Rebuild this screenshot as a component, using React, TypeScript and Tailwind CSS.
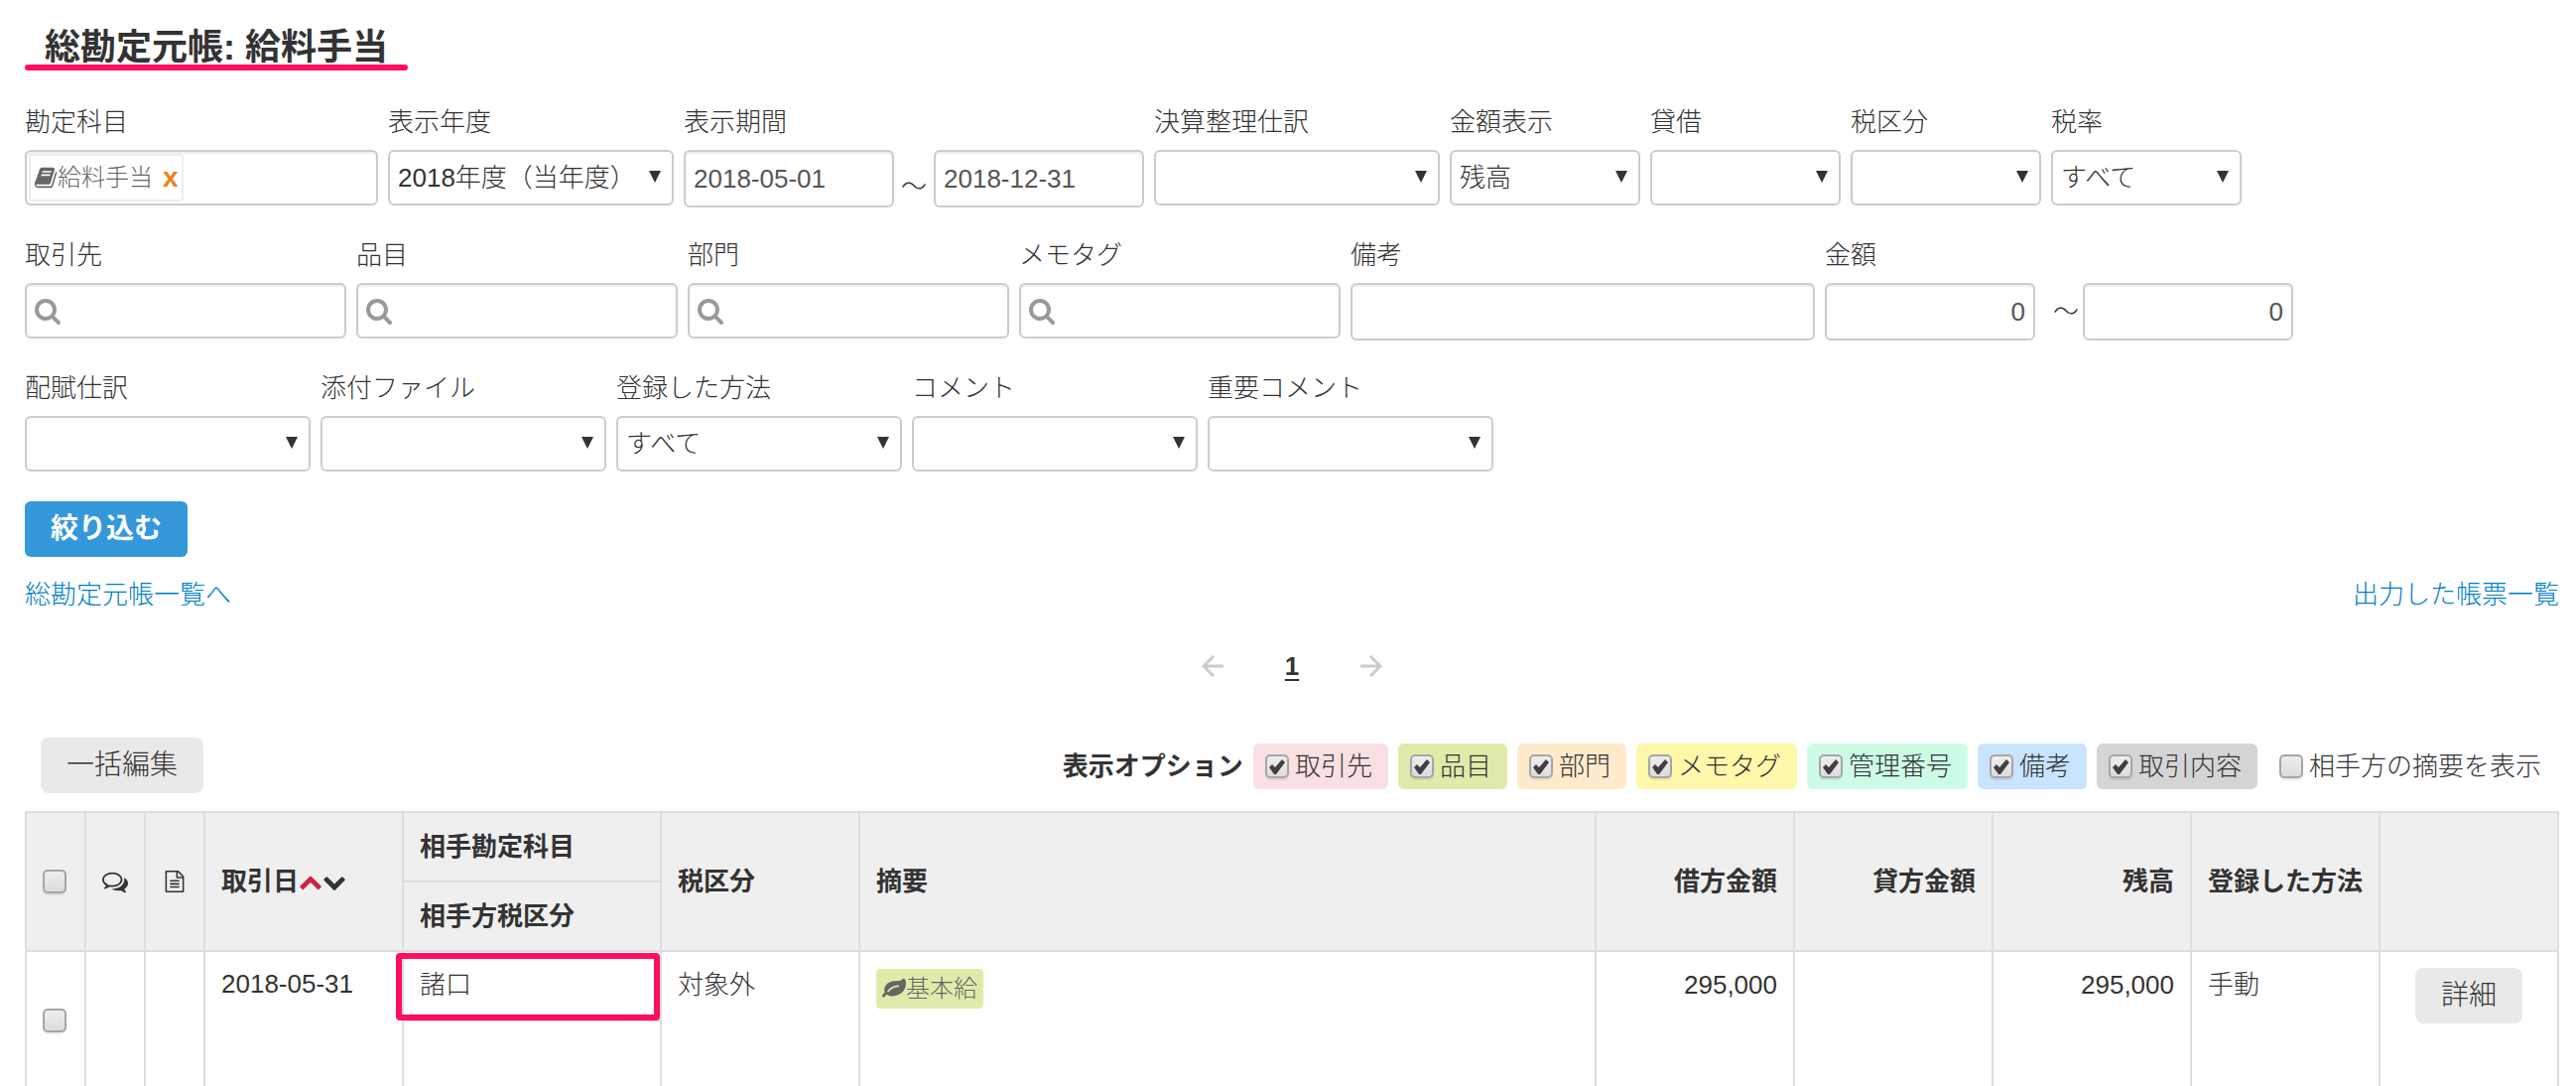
import { useId } from "react";
import type { ReactNode } from "react";
import clsx from "clsx";

const icons = {
  search:
    "M1152 832q0-185-131.5-316.5t-316.5-131.5-316.5 131.5-131.5 316.5 131.5 316.5 316.5 131.5 316.5-131.5 131.5-316.5zm512 832q0 52-38 90t-90 38q-54 0-90-38l-343-342q-179 124-399 124-143 0-273.5-55.5t-225-150-150-225-55.5-273.5 55.5-273.5 150-225 225-150 273.5-55.5 273.5 55.5 225 150 150 225 55.5 273.5q0 220-124 399l343 343q37 37 37 90z",
  book:
    "M1703 478q40 57 18 129l-275 906q-19 64-76.5 107.5t-122.5 43.5h-923q-77 0-148.5-53.5t-99.5-131.5q-24-67-2-127 0-4 3-27t4-37q1-8-3-21.5t-3-19.5q2-11 8-21t16.5-23.5 16.5-23.5q23-38 45-91.5t30-91.5q3-10 .5-30t-.5-28q3-11 17-28t17-23q21-36 42-92t25-90q1-9-2.5-32t.5-28q4-13 22-30.5t22-22.5q19-26 42.5-84.5t27.5-96.5q1-8-3-25.5t-2-26.5q2-8 9-18t18-23 17-21q8-12 16.5-30.5t15-35 16-36 19.5-32 26.5-23.5 36-11.5 47.5 5.5l-1 3q38-9 51-9h761q74 0 114 56t18 130l-274 906q-36 119-71.5 153.5t-128.5 34.5h-869q-27 0-38 15-11 16-1 43 24 70 144 70h923q29 0 56-15.5t35-41.5l300-987q7-22 5-57 38 15 59 43zm-1064 2q-4 13 2 22.5t20 9.5h608q13 0 25.5-9.5t16.5-22.5l21-64q4-13-2-22.5t-20-9.5h-608q-13 0-25.5 9.5t-16.5 22.5zm-83 256q-4 13 2 22.5t20 9.5h608q13 0 25.5-9.5t16.5-22.5l21-64q4-13-2-22.5t-20-9.5h-608q-13 0-25.5 9.5t-16.5 22.5z",
  leaf:
    "M1280 704q0-26-19-45t-45-19q-172 0-318 49.5t-259.5 134-235.5 219.5q-19 21-19 45 0 26 19 45t45 19q24 0 45-19 27-24 74-71t67-66q137-124 268.5-176t313.5-52q26 0 45-19t19-45zm512-198q0 95-20 193-46 224-184.5 383t-357.5 268q-214 108-438 108-148 0-286-47-15-5-88-42t-96-37q-16 0-39.5 32t-45 70-52.5 70-60 32q-43 0-63.5-17.5t-45.5-59.5q-2-4-6-11t-5.5-10-3-9.5-1.5-13.5q0-35 31-73.5t68-65.5 68-56 31-48q0-4-14-38t-16-44q-9-51-9-104 0-115 43.5-220t119-184.5 170.5-139 204-95.5q55-18 145-25.5t179.5-9 178.5-6 163.5-24 113.5-56.5l29.5-29.5 29.5-28 27-20 36.5-16 43.5-4.5q39 0 70.5 46t47.5 112 24 124 8 96z",
  comments:
    "M704 384q-153 0-286 52t-211.5 141-78.5 191q0 82 53 158t149 132l97 56-35 84q34-20 62-39l44-31 53 10q78 14 153 14 153 0 286-52t211.5-141 78.5-191-78.5-191-211.5-141-286-52zm0-128q191 0 353.5 68.5t256.5 186.5 94 257-94 257-256.5 186.5-353.5 68.5q-86 0-176-16-124 88-278 128-36 9-86 16h-3q-11 0-20.5-8t-11.5-21q-1-3-1-6.5t.5-6.5 2-6l2.5-5 3.5-5.5 4-5 4.5-5 4-4.5q5-6 23-25t26-29.5 22.5-29 25-38.5 20.5-44q-124-72-195-177t-71-224q0-139 94-257t256.5-186.5 353.5-68.5zm822 1169q10 24 20.5 44t25 38.5 22.5 29 26 29.5 23 25q1 1 4 4.5t4.5 5 4 5 3.5 5.5l2.5 5 2 6 .5 6.5-1 6.5q-3 14-13 22t-22 7q-50-7-86-16-154-40-278-128-90 16-176 16-271 0-472-132 58 4 88 4 161 0 309-45t264-129q125-92 192-212t67-254q0-77-23-152 129 71 204 178t75 230q0 120-71 224.5t-195 176.5z",
  file:
    "M1596 380q28 28 48 76t20 88v1152q0 40-28 68t-68 28h-1344q-40 0-68-28t-28-68v-1600q0-40 28-68t68-28h896q40 0 88 20t76 48zm-444-244v376h376q-10-29-22-41l-313-313q-12-12-41-22zm384 1528v-1024h-416q-40 0-68-28t-28-68v-416h-768v1536h1280zm-1024-864q0-14 9-23t23-9h704q14 0 23 9t9 23v64q0 14-9 23t-23 9h-704q-14 0-23-9t-9-23v-64zm736 224q14 0 23 9t9 23v64q0 14-9 23t-23 9h-704q-14 0-23-9t-9-23v-64q0-14 9-23t23-9h704zm0 256q14 0 23 9t9 23v64q0 14-9 23t-23 9h-704q-14 0-23-9t-9-23v-64q0-14 9-23t23-9h704z",
  up:
    "M1683 1331l-166 165q-19 19-45 19t-45-19l-531-531-531 531q-19 19-45 19t-45-19l-166-165q-19-19-19-45.5t19-45.5l742-741q19-19 45-19t45 19l742 741q19 19 19 45.5t-19 45.5z",
  down:
    "M1683 808l-742 741q-19 19-45 19t-45-19l-742-741q-19-19-19-45.5t19-45.5l166-165q19-19 45-19t45 19l531 531 531-531q19-19 45-19t45 19l166 165q19 19 19 45.5t-19 45.5z",
};

function Icon({ name, className }: { name: keyof typeof icons; className?: string }) {
  return (
    <svg viewBox="0 0 1792 1792" className={clsx("shrink-0 fill-current", className)} aria-hidden="true">
      <path d={icons[name]} />
    </svg>
  );
}

const control = "rounded-md border-2 border-[#ccc] bg-white font-light";
const inset = "shadow-[inset_0_2px_2px_rgba(0,0,0,0.08)]";

function Field({ label, id, children }: { label: string; id: string; children: ReactNode }) {
  return (
    <div className="flex flex-col items-start gap-3">
      <label htmlFor={id}>{label}</label>
      {children}
    </div>
  );
}

function SelectField({ label, value = "", narrow }: { label: string; value?: string; narrow?: boolean }) {
  const id = useId();
  return (
    <Field label={label} id={id}>
      <div className={clsx("relative", narrow ? "w-48" : "w-72")}>
        <select id={id} className={clsx(control, "h-14 w-full appearance-none px-2")}>
          <option>{value}</option>
        </select>
        <svg
          viewBox="0 0 12 12"
          className="pointer-events-none absolute top-[21px] right-[13px] size-3 fill-current"
          aria-hidden="true"
        >
          <path d="M0 0h12L6 12z" />
        </svg>
      </div>
    </Field>
  );
}

function SearchField({ label }: { label: string }) {
  const id = useId();
  return (
    <Field label={label} id={id}>
      <div className={clsx(control, inset, "flex h-14 w-[324px] items-center gap-2 px-2")}>
        <Icon name="search" className="size-7 text-[#999]" />
        <input id={id} type="text" className="w-full min-w-0 outline-none" />
      </div>
    </Field>
  );
}

function TextInput({
  id,
  value,
  label,
  className,
}: {
  id?: string;
  value?: string;
  label?: string;
  className: string;
}) {
  return (
    <input
      id={id}
      type="text"
      aria-label={label}
      defaultValue={value}
      className={clsx(control, inset, "h-[58px] px-2 text-[#555]", className)}
    />
  );
}

function Checkbox({ checked, label, id }: { checked?: boolean; label?: string; id?: string }) {
  return (
    <span className="relative block size-6 shrink-0">
      <input
        id={id}
        type="checkbox"
        aria-label={label}
        defaultChecked={checked}
        className="peer block size-6 appearance-none rounded-[5px] border-2 border-[#a6a6a6] bg-linear-to-b from-[#eee] to-[#dcdcdc] shadow-[0_2px_1px_rgba(0,0,0,0.08)]"
      />
      <svg
        viewBox="0 0 24 24"
        className="pointer-events-none absolute inset-0 hidden size-6 peer-checked:block"
        aria-hidden="true"
      >
        <path d="M4 13l3-3 3 3 7-8 3 3-9 12h-2z" className="fill-[#404040]" />
      </svg>
    </span>
  );
}

const displayOptions = [
  { label: "取引先", color: "bg-[#f9e0e3]", checked: true },
  { label: "品目", color: "bg-[#dfebaa]", checked: true },
  { label: "部門", color: "bg-[#ffebcc]", checked: true },
  { label: "メモタグ", color: "bg-[#fff7aa]", checked: true },
  { label: "管理番号", color: "bg-[#ccfce6]", checked: true },
  { label: "備考", color: "bg-[#c9e4ff]", checked: true },
  { label: "取引内容", color: "bg-[#d5d5d5]", checked: true },
  { label: "相手方の摘要を表示", color: "bg-transparent", checked: false },
];

function DisplayOption({ label, color, checked }: (typeof displayOptions)[number]) {
  const id = useId();
  return (
    <div className={clsx("flex h-[46px] items-center gap-1.5 rounded-md pr-4 pl-3", color)}>
      <Checkbox id={id} checked={checked} />
      <label htmlFor={id}>{label}</label>
    </div>
  );
}

function SearchForm() {
  return (
    <form className="mt-9" onSubmit={(e) => e.preventDefault()}>
      <div className="flex flex-col gap-8">
        <div className="flex flex-wrap gap-2.5">
          <Field label="勘定科目" id="account">
            <div className={clsx(control, inset, "flex h-14 w-[356px] items-center p-0.5")}>
              <span className="flex h-12 shrink-0 items-center rounded border-2 border-[#eee] bg-white px-[3px] text-2xl text-[#666]">
                <Icon name="book" className="size-6" />
                給料手当
                <button
                  type="button"
                  aria-label="給料手当を削除"
                  className="ml-2.5 text-[28px] font-bold text-[#ef7f1a]"
                >
                  x
                </button>
              </span>
              <input id="account" type="text" className="w-full min-w-0 outline-none" />
            </div>
          </Field>
          <SelectField label="表示年度" value="2018年度（当年度）" />
          <Field label="表示期間" id="date-from">
            <div className="flex items-center">
              <TextInput id="date-from" value="2018-05-01" className="w-[212px]" />
              <span className="w-10 pt-4 text-center">～</span>
              <TextInput label="表示期間（終了）" value="2018-12-31" className="w-[212px]" />
            </div>
          </Field>
          <SelectField label="決算整理仕訳" />
          <SelectField label="金額表示" value="残高" narrow />
          <SelectField label="貸借" narrow />
          <SelectField label="税区分" narrow />
          <SelectField label="税率" value="すべて" narrow />
        </div>

        <div className="flex flex-wrap gap-2.5">
          <SearchField label="取引先" />
          <SearchField label="品目" />
          <SearchField label="部門" />
          <SearchField label="メモタグ" />
          <Field label="備考" id="note">
            <TextInput id="note" className="w-[468px]" />
          </Field>
          <Field label="金額" id="amount-min">
            <div className="flex items-center">
              <TextInput id="amount-min" value="0" className="w-[212px] text-right" />
              <span className="w-12 pr-1 text-right">～</span>
              <TextInput label="金額（上限）" value="0" className="w-[212px] text-right" />
            </div>
          </Field>
        </div>

        <div className="flex flex-wrap gap-2.5">
          <SelectField label="配賦仕訳" />
          <SelectField label="添付ファイル" />
          <SelectField label="登録した方法" value="すべて" />
          <SelectField label="コメント" />
          <SelectField label="重要コメント" />
        </div>
      </div>

      <button
        type="submit"
        className="mt-[30px] h-14 rounded-md bg-[#3498db] px-[26px] text-[28px] font-bold text-white"
      >
        絞り込む
      </button>
    </form>
  );
}

function Pager() {
  return (
    <nav className="mt-10 flex items-center justify-center gap-[62px]" aria-label="ページ">
      <svg viewBox="0 0 22 22" className="size-[22px] fill-none stroke-[#ccc] stroke-[3]" aria-label="前へ">
        <path d="M22 11H2M12 1L2 11l10 10" />
      </svg>
      <a href="#1" className="font-bold underline decoration-2 underline-offset-4" aria-current="page">
        1
      </a>
      <svg viewBox="0 0 22 22" className="size-[22px] fill-none stroke-[#ccc] stroke-[3]" aria-label="次へ">
        <path d="M0 11h20M10 1l10 10-10 10" />
      </svg>
    </nav>
  );
}

const grayButton = "h-14 rounded-lg bg-[#e9e9e9] px-[26px] text-[28px]";
const cell = "border-2 border-[#ddd] px-4";

function LedgerTable() {
  return (
    <table className="mt-[18px] w-full table-fixed border-collapse">
      <colgroup>
        <col className="w-[60px]" />
        <col className="w-[60px]" />
        <col className="w-[60px]" />
        <col className="w-[200px]" />
        <col className="w-[260px]" />
        <col className="w-[200px]" />
        <col />
        <col className="w-[200px]" />
        <col className="w-[200px]" />
        <col className="w-[200px]" />
        <col className="w-[190px]" />
        <col className="w-[180px]" />
      </colgroup>
      <thead className="bg-[#efefef] text-left font-bold">
        <tr className="h-[70px]">
          <th rowSpan={2} className={cell}>
            <Checkbox label="すべて選択" />
          </th>
          <th rowSpan={2} className={cell}>
            <Icon name="comments" className="size-[26px]" />
          </th>
          <th rowSpan={2} className={cell}>
            <Icon name="file" className="mx-auto size-[22px]" />
          </th>
          <th rowSpan={2} className={cell}>
            <div className="flex items-center">
              取引日
              <button type="button" aria-label="昇順" className="text-[#c9283e]">
                <Icon name="up" className="size-6" />
              </button>
              <button type="button" aria-label="降順">
                <Icon name="down" className="size-6" />
              </button>
            </div>
          </th>
          <th className={cell}>相手勘定科目</th>
          <th rowSpan={2} className={cell}>税区分</th>
          <th rowSpan={2} className={cell}>摘要</th>
          <th rowSpan={2} className={clsx(cell, "text-right")}>借方金額</th>
          <th rowSpan={2} className={clsx(cell, "text-right")}>貸方金額</th>
          <th rowSpan={2} className={clsx(cell, "text-right")}>残高</th>
          <th rowSpan={2} className={clsx(cell, "whitespace-nowrap")}>登録した方法</th>
          <th rowSpan={2} className={cell} />
        </tr>
        <tr className="h-[70px]">
          <th className={cell}>相手方税区分</th>
        </tr>
      </thead>
      <tbody className="align-top">
        <tr className="h-[70px]">
          <td rowSpan={2} className={clsx(cell, "align-middle")}>
            <Checkbox label="2018-05-31の取引を選択" />
          </td>
          <td rowSpan={2} className={cell} />
          <td rowSpan={2} className={cell} />
          <td rowSpan={2} className={clsx(cell, "pt-4")}>2018-05-31</td>
          <td className={clsx(cell, "relative pt-[17px]")}>
            諸口
            <span className="absolute top-px -bottom-px -left-2 right-0 rounded border-6 border-[#ff0f5b]" />
          </td>
          <td rowSpan={2} className={clsx(cell, "pt-[17px]")}>対象外</td>
          <td rowSpan={2} className={clsx(cell, "pt-[17px]")}>
            <span className="flex h-10 w-fit items-center rounded bg-[#dfebaa] px-1.5 text-2xl text-[#666]">
              <Icon name="leaf" className="size-6" />
              基本給
            </span>
          </td>
          <td rowSpan={2} className={clsx(cell, "pt-[17px] text-right")}>295,000</td>
          <td rowSpan={2} className={cell} />
          <td rowSpan={2} className={clsx(cell, "pt-[17px] text-right")}>295,000</td>
          <td rowSpan={2} className={clsx(cell, "pt-[17px]")}>手動</td>
          <td rowSpan={2} className={clsx(cell, "pt-4 text-center")}>
            <button type="button" className={grayButton}>詳細</button>
          </td>
        </tr>
        <tr className="h-[70px]">
          <td className={cell} />
        </tr>
      </tbody>
    </table>
  );
}

export default function App() {
  return (
    <main className="bg-white pt-8 pr-[17px] pl-[25px] font-['Liberation_Sans','Noto_Sans_CJK_JP',sans-serif] text-[26px] leading-8 font-light text-[#333]">
      <div className="w-fit">
        <h1 className="px-5 text-4xl leading-8 font-bold">総勘定元帳: 給料手当</h1>
        <div className="mt-px h-1.5 rounded-full bg-[#ff0f5b]" />
      </div>

      <SearchForm />

      <div className="mt-[22px] flex justify-between text-[#0080c8]">
        <a href="#ledgers">総勘定元帳一覧へ</a>
        <a href="#reports">出力した帳票一覧</a>
      </div>

      <Pager />

      <div className="mt-14 flex flex-wrap items-end justify-between pr-0.5 pl-4">
        <button type="button" className={grayButton}>一括編集</button>
        <div className="flex flex-wrap items-center gap-2.5 pb-1">
          <span className="font-bold">表示オプション</span>
          {displayOptions.map((option) => (
            <DisplayOption key={option.label} {...option} />
          ))}
        </div>
      </div>

      <LedgerTable />
    </main>
  );
}
